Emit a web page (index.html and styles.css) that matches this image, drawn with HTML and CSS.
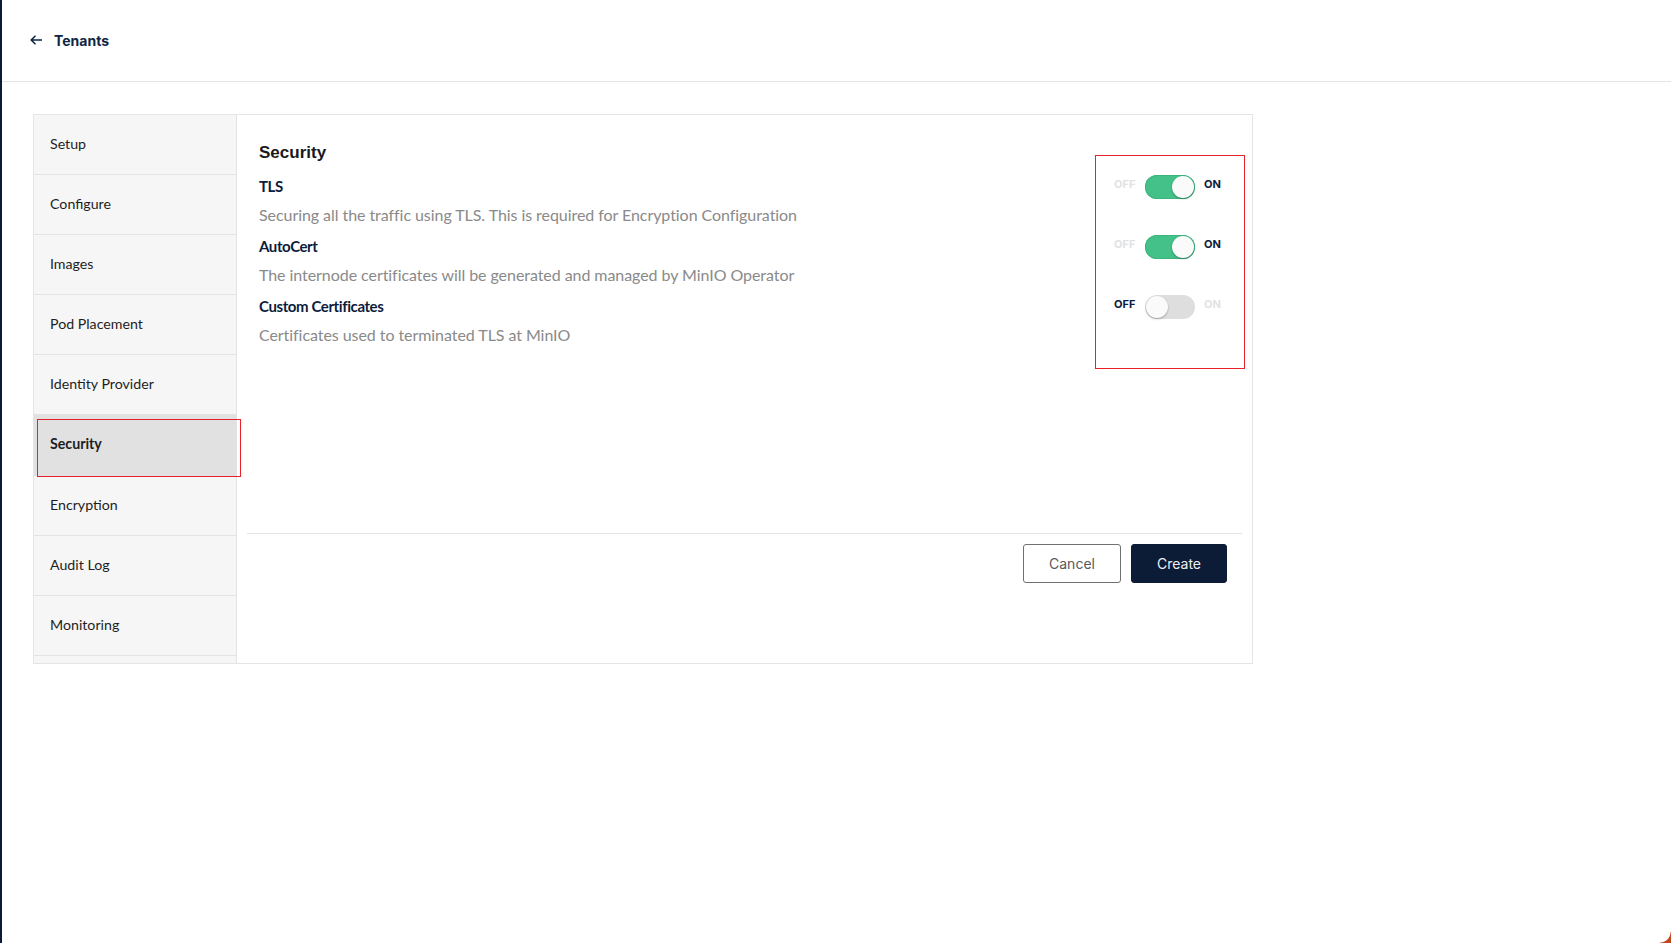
FILE: index.html
```html
<!DOCTYPE html>
<html lang="en">
<head>
<meta charset="utf-8">
<title>Tenants - Create</title>
<link rel="stylesheet" href="styles.css">
</head>
<body>
<div class="page">
  <header class="topbar">
    <a class="back" href="#">
      <svg class="back-icon" width="12" height="10" viewBox="0 0 12 10" aria-hidden="true">
        <path d="M11.5 5H1.5M5 1.2L1.2 5L5 8.8" fill="none" stroke="#0e2644" stroke-width="1.6" stroke-linecap="round" stroke-linejoin="round"/>
      </svg>
      <span class="back-label">Tenants</span>
    </a>
  </header>

  <main class="main">
    <section class="wizard">
      <nav class="steps">
        <div class="step">Setup</div>
        <div class="step">Configure</div>
        <div class="step">Images</div>
        <div class="step">Pod Placement</div>
        <div class="step">Identity Provider</div>
        <div class="step step-active">Security<span class="mark mark-step"></span></div>
        <div class="step">Encryption</div>
        <div class="step">Audit Log</div>
        <div class="step">Monitoring</div>
        <div class="step step-cut"></div>
      </nav>

      <div class="panel">
        <div class="form">
          <div class="fields">
            <h2 class="form-title">Security</h2>
            <div class="field">
              <div class="field-label">TLS</div>
              <div class="field-desc">Securing all the traffic using TLS. This is required for Encryption Configuration</div>
            </div>
            <div class="field">
              <div class="field-label">AutoCert</div>
              <div class="field-desc">The internode certificates will be generated and managed by MinIO Operator</div>
            </div>
            <div class="field">
              <div class="field-label">Custom Certificates</div>
              <div class="field-desc">Certificates used to terminated TLS at MinIO</div>
            </div>
          </div>

          <div class="toggles">
            <div class="toggle-row">
              <span class="tlabel">OFF</span>
              <span class="switch on"><span class="knob"></span></span>
              <span class="tlabel active">ON</span>
            </div>
            <div class="toggle-row">
              <span class="tlabel">OFF</span>
              <span class="switch on"><span class="knob"></span></span>
              <span class="tlabel active">ON</span>
            </div>
            <div class="toggle-row">
              <span class="tlabel active">OFF</span>
              <span class="switch"><span class="knob"></span></span>
              <span class="tlabel">ON</span>
            </div>
          </div>
        </div>

        <div class="actions">
          <button class="btn btn-outline" type="button">Cancel</button>
          <button class="btn btn-primary" type="button">Create</button>
        </div>
      </div>
    </section>
  </main>
</div>
<div class="corner"></div>
</body>
</html>
```

FILE: styles.css
```css
* { box-sizing: border-box; }

html, body {
  margin: 0;
  padding: 0;
  background: #ffffff;
}

body {
  font-family: "Lato", "Noto Sans", sans-serif;
  color: #1c1c1c;
}

.page {
  min-height: 943px;
  border-left: 2px solid #0b1a36;
}

/* header */
.topbar {
  height: 82px;
  border-bottom: 1px solid #e4e4e4;
  display: flex;
  align-items: center;
  padding-left: 28px;
  padding-bottom: 1px;
}

.back {
  display: flex;
  align-items: center;
  gap: 12px;
  text-decoration: none;
  color: #0e2644;
}

.back-icon { display: block; }

.back-label {
  font-family: "Inter", "Liberation Sans", sans-serif;
  font-weight: 700;
  font-size: 14px;
}

/* main */
.main {
  padding: 32px 0 0 31px;
}

.wizard {
  width: 1220px;
  height: 550px;
  border: 1px solid #e5e5e5;
  display: flex;
}

.steps {
  width: 203px;
  flex: none;
  background: #f6f6f6;
  border-right: 1px solid #e3e3e3;
}

.step {
  position: relative;
  height: 60px;
  border-bottom: 1px solid #e3e3e3;
  display: flex;
  align-items: center;
  padding-left: 16px;
  padding-bottom: 2px;
  font-size: 14.2px;
  color: #1e1e1e;
}

.step-active {
  background: #e1e1e1;
  font-weight: 700;
  height: 61px;
  border-bottom: none;
  padding-bottom: 4px;
}

.step-cut { height: 8px; border-bottom: none; padding: 0; }

.mark {
  position: absolute;
  border: 1px solid #e8202a;
  pointer-events: none;
}

.mark-step {
  left: 3px;
  right: -5px;
  top: 4px;
  bottom: -1px;
}

/* panel */
.panel {
  flex: 1;
  padding: 24px 10px 0 10px;
  display: flex;
  flex-direction: column;
}

.form {
  height: 395px;
  display: flex;
  align-items: flex-start;
  padding-left: 12px;
  border-bottom: 1px solid #e4e4e4;
}

.fields { flex: 1; }

.form-title {
  margin: 0 0 10px 0;
  padding-top: 2px;
  font-family: "Liberation Sans", "Inter", sans-serif;
  font-weight: 700;
  font-size: 17px;
  line-height: 24px;
  color: #1a1a1a;
}

.field { margin-bottom: 8px; }

.field-label {
  font-weight: 700;
  font-size: 15px;
  line-height: 22px;
  color: #0b1c3c;
  letter-spacing: -0.4px;
  margin-bottom: 6px;
}

.field-desc {
  font-size: 16px;
  line-height: 24px;
  color: #8a8a8a;
  letter-spacing: -0.06px;
}

/* toggles */
.toggles {
  width: 150px;
  margin-top: 16px;
  margin-right: -3px;
  border: 1px solid #e8202a;
  padding: 1px 0 31px 0;
}

.toggle-row {
  height: 60px;
  display: flex;
  align-items: center;
  padding-left: 18px;
}

.tlabel {
  position: relative;
  top: -3px;
  font-family: "Inter", "Liberation Sans", sans-serif;
  font-size: 11px;
  font-weight: 700;
  color: #e2e2e2;
  width: 22px;
}

.tlabel.active { color: #0b1c3c; }

.switch {
  position: relative;
  width: 50px;
  height: 24px;
  border-radius: 12px;
  background: #dedede;
  margin: 0 9px 0 9px;
  flex: none;
}

.switch.on {
  background: #44c189;
  box-shadow: inset 0 0 0 1px #3bb37e;
}

.knob {
  position: absolute;
  top: 1px;
  left: 1px;
  width: 22px;
  height: 22px;
  border-radius: 50%;
  background: #fafafa;
  box-shadow: 0 1px 2px rgba(0,0,0,0.3);
}

.switch.on .knob { left: 27px; }

/* actions */
.actions {
  display: flex;
  justify-content: flex-end;
  gap: 10px;
  padding: 10px 15px 0 0;
}

.btn {
  height: 39px;
  border-radius: 3px;
  font-family: "Inter", "Liberation Sans", sans-serif;
  font-size: 14px;
  cursor: pointer;
}

.btn-outline {
  width: 98px;
  background: #ffffff;
  border: 1px solid #707070;
  color: #5a5a5a;
}

.btn-primary {
  width: 96px;
  background: #0c1b36;
  border: 1px solid #0c1b36;
  color: #eef0f4;
}

.corner {
  position: fixed;
  right: 0;
  bottom: 0;
  width: 11px;
  height: 11px;
  background: radial-gradient(circle at 0 0, #ffffff 10px, #c2461f 11px);
}
```
